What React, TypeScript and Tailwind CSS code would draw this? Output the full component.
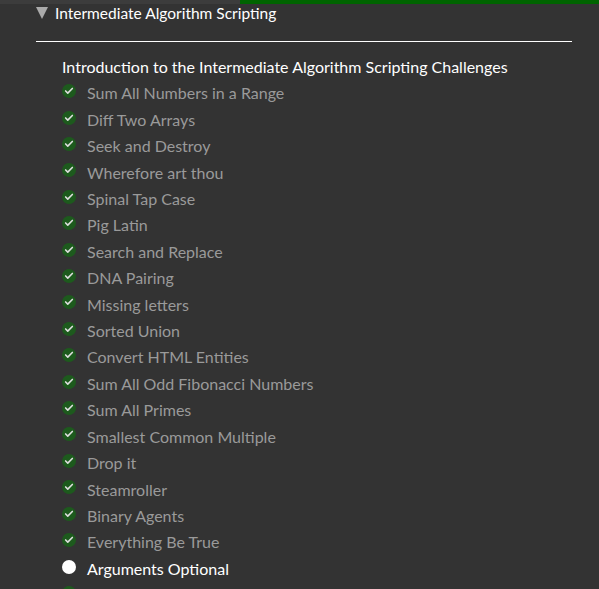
import { Check } from 'lucide-react';

const done = [
  'Sum All Numbers in a Range',
  'Diff Two Arrays',
  'Seek and Destroy',
  'Wherefore art thou',
  'Spinal Tap Case',
  'Pig Latin',
  'Search and Replace',
  'DNA Pairing',
  'Missing letters',
  'Sorted Union',
  'Convert HTML Entities',
  'Sum All Odd Fibonacci Numbers',
  'Sum All Primes',
  'Smallest Common Multiple',
  'Drop it',
  'Steamroller',
  'Binary Agents',
  'Everything Be True',
];

export default function App() {
  return (
    <div className="w-[599px] h-[589px] overflow-hidden bg-[#333] font-['Lato',sans-serif] text-[16px]">
      {/* top strip */}
      <div className="flex h-[4px]">
        <div className="w-[240px] bg-[#3c3c3c]" />
        <div className="flex-1 bg-[#006400]" />
      </div>

      <div className="pl-[36px] pr-[27px]">
        <div className="flex items-center h-[18px] leading-[18px] text-white text-[15.5px]">
          <span className="w-0 h-0 border-l-[6px] border-r-[6px] border-t-[12px] border-l-transparent border-r-transparent border-t-[#aaa] mr-[7px]" />
          <span>Intermediate Algorithm Scripting</span>
        </div>
        <div className="mt-[19px] h-px bg-white" />

        <div className="pl-[26px] pt-[14px]">
          <div className="text-white leading-[21.4px] mb-[5px]">
            Introduction to the Intermediate Algorithm Scripting Challenges
          </div>
          {done.map((name) => (
            <div key={name} className="flex items-center leading-[21.4px] mb-[5px]">
              <span className="w-[14px] h-[14px] rounded-full bg-[#1d5a1d] flex items-center justify-center mr-[11px] -mt-[4px]">
                <Check className="w-[10px] h-[10px] text-[#ddd]" strokeWidth={4} />
              </span>
              <span className="text-[#9a9a9a]">{name}</span>
            </div>
          ))}
          <div className="flex items-center leading-[21.4px] mb-[5px]">
            <span className="w-[14px] h-[14px] rounded-full bg-white mr-[11px] -mt-[2px]" />
            <span className="text-white">Arguments Optional</span>
          </div>
          <div className="flex items-center h-[21.4px]">
            <span className="w-[14px] h-[14px] rounded-full bg-[#1d5a1d] -mt-[4px]" />
          </div>
        </div>
      </div>
    </div>
  );
}
